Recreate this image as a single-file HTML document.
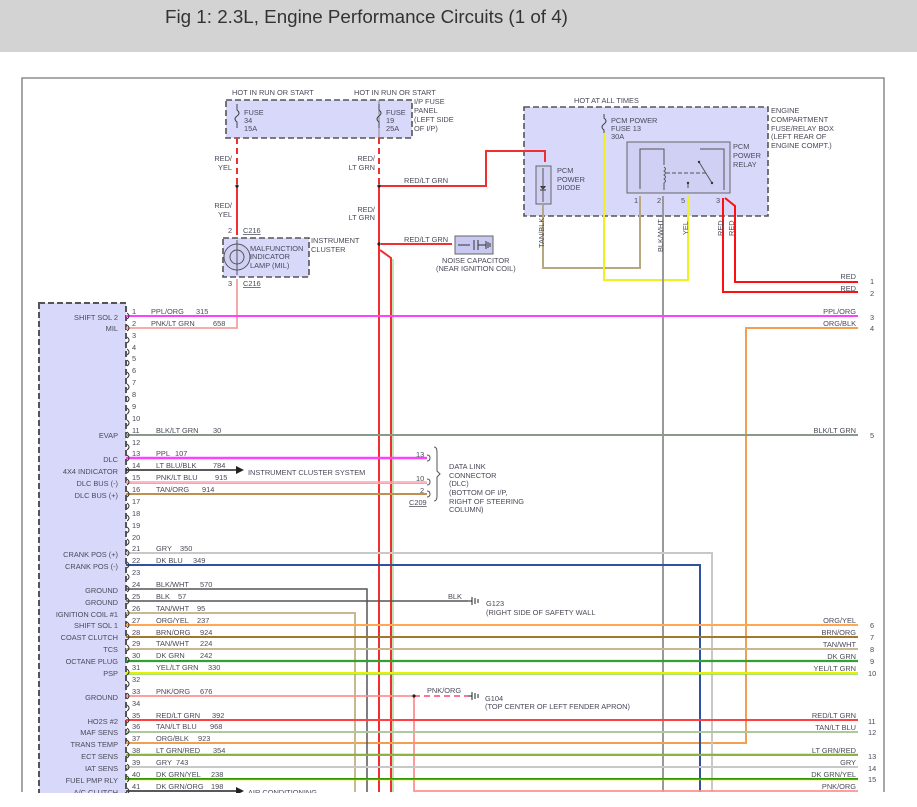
<!DOCTYPE html>
<html><head><meta charset="utf-8"><style>
html,body{margin:0;padding:0;background:#fff;width:917px;height:807px;overflow:hidden}
.hdr{position:absolute;left:0;top:0;width:917px;height:52px;background:#d3d3d3}
.hdr div{position:absolute;left:165px;top:6px;font:18.8px "Liberation Sans",sans-serif;color:#333}
svg{position:absolute;left:0;top:0}
text{font-family:"Liberation Sans",sans-serif;font-size:7.4px;fill:#4a4a5a}
.r{text-anchor:end}
</style></head><body>
<div class="hdr"><div>Fig 1: 2.3L, Engine Performance Circuits (1 of 4)</div></div>
<svg width="917" height="807" viewBox="0 0 917 807">
<path d="M22,792 V78 H884 V792" fill="none" stroke="#777" stroke-width="1.3"/>
<rect x="39" y="303" width="87" height="492" fill="#d8d8fa" stroke="#555" stroke-width="2" stroke-dasharray="6,3"/>
<rect x="226" y="100" width="186" height="38" fill="#d8d8fa" stroke="#555" stroke-width="1.6" stroke-dasharray="6,3"/>
<line x1="379" y1="100" x2="379" y2="138" stroke="#888"/>
<rect x="223" y="238" width="86" height="39" fill="#d8d8fa" stroke="#555" stroke-width="1.6" stroke-dasharray="6,3"/>
<rect x="524" y="107" width="244" height="109" fill="#d8d8fa" stroke="#555" stroke-width="1.6" stroke-dasharray="6,3"/>
<rect x="627" y="142" width="103" height="51" fill="#d0d0f4" stroke="#666"/>
<rect x="536" y="166" width="15" height="38" fill="#d0d0f4" stroke="#666"/>
<rect x="455" y="236" width="38" height="18" fill="#c8c8f0" stroke="#666"/>
<path d="M640,189 V149 H664 V165 M664,167 q3,2 0,4 q3,2 0,4 q3,2 0,4 q3,2 0,4 V190 M688,183 V188 M700,149 H724 V190 M699,162 L712,183" fill="none" stroke="#555"/>
<line x1="666" y1="173" x2="708" y2="173" stroke="#555" stroke-dasharray="4,2"/>
<circle cx="688" cy="183" r="1.2" fill="#333"/><circle cx="699" cy="162" r="1.2" fill="#333"/><circle cx="712" cy="183" r="1.2" fill="#333"/>
<path d="M543,190 l-3,-4 h6 z" fill="#333"/><line x1="540" y1="190" x2="546" y2="190" stroke="#333"/>
<line x1="543" y1="168" x2="543" y2="202" stroke="#555"/>
<path d="M458,245 h12 M474,240 v10 M478,240 v10 M478,245 h8 M486,241 v8 M488,242 v6 M490,243 v4" stroke="#333" fill="none"/>
<circle cx="237" cy="257" r="13" fill="#d0d0f4" stroke="#555"/>
<circle cx="237" cy="257" r="7" fill="none" stroke="#555"/>
<line x1="237" y1="240" x2="237" y2="275" stroke="#555"/>
<path d="M237,104 v6 q4,3 0,6 q-4,3 0,6 v6 M379,104 v6 q4,3 0,6 q-4,3 0,6 v6 M604,114 v4 q4,3 0,6 q-4,3 0,6 v4" fill="none" stroke="#444"/>
<line x1="237" y1="138" x2="237" y2="186" stroke="#f03030" stroke-width="2" stroke-dasharray="6,4"/>
<line x1="237" y1="186" x2="237" y2="235" stroke="#f03030" stroke-width="2"/>
<line x1="379" y1="138" x2="379" y2="186" stroke="#f03030" stroke-width="2" stroke-dasharray="6,4"/>
<path d="M379,186 V792" stroke="#f03030" stroke-width="2" fill="none"/>
<path d="M380,250 L391,258 V792" stroke="#f03030" stroke-width="2" fill="none"/>
<path d="M393,259 V792" stroke="#60c040" stroke-width="0.8" fill="none"/>
<path d="M380,186 H486 V151 H545 V162" stroke="#f03030" stroke-width="2" fill="none"/>
<path d="M381,244 H452" stroke="#f03030" stroke-width="2" fill="none"/>
<circle cx="237" cy="186" r="1.6" fill="#222"/><circle cx="379" cy="186" r="1.6" fill="#222"/><circle cx="379" cy="244" r="1.6" fill="#222"/>
<path d="M237,279 V328 H126" stroke="#f4a0a0" stroke-width="1.8" fill="none"/>
<path d="M543,205 V268 H640 V196" stroke="#b8a880" stroke-width="2" fill="none"/>
<path d="M604,133 V280 H688 V196" stroke="#f0f020" stroke-width="2" fill="none"/>
<path d="M663,196 V792" stroke="#999" stroke-width="2" fill="none"/>
<path d="M723,198 V292 H858 M725,198 L735,206 V282 H858" stroke="#ff1010" stroke-width="2" fill="none"/>
<line x1="126" y1="316" x2="858" y2="316" stroke="#ff40ff" stroke-width="2"/>
<path d="M126,743 H746 V328 H858" stroke="#f0a050" stroke-width="2" fill="none"/>
<line x1="126" y1="435" x2="858" y2="435" stroke="#8a9a8a" stroke-width="2"/>
<line x1="126" y1="458" x2="427" y2="458" stroke="#ff40ff" stroke-width="2.5"/>
<line x1="126" y1="470" x2="236" y2="470" stroke="#222" stroke-width="1.5"/><path d="M236,466 l8,4 l-8,4z" fill="#222"/>
<line x1="126" y1="482" x2="427" y2="482" stroke="#ffa0b0" stroke-width="1.5"/><line x1="126" y1="483.5" x2="427" y2="483.5" stroke="#90c8f0" stroke-width="1"/>
<line x1="126" y1="494" x2="427" y2="494" stroke="#c09050" stroke-width="2"/>
<path d="M126,553 H712 V792" stroke="#c8c8c8" stroke-width="2" fill="none"/>
<path d="M126,565 H700 V792" stroke="#3050a0" stroke-width="2" fill="none"/>
<path d="M126,589 H367 V792" stroke="#555" stroke-width="1.5" fill="none"/>
<line x1="126" y1="601" x2="468" y2="601" stroke="#555" stroke-width="1.5"/>
<path d="M126,613 H355 V792" stroke="#c8b890" stroke-width="2" fill="none"/>
<line x1="126" y1="625" x2="858" y2="625" stroke="#ffa850" stroke-width="2"/>
<line x1="126" y1="637" x2="858" y2="637" stroke="#a07830" stroke-width="2"/>
<line x1="126" y1="649" x2="858" y2="649" stroke="#c8b890" stroke-width="2"/>
<line x1="126" y1="661" x2="858" y2="661" stroke="#33a033" stroke-width="2.2"/>
<line x1="126" y1="673" x2="858" y2="673" stroke="#e8f000" stroke-width="2"/><line x1="126" y1="674.5" x2="858" y2="674.5" stroke="#90d060" stroke-width="0.8"/>
<line x1="126" y1="696" x2="414" y2="696" stroke="#ff9090" stroke-width="1.8"/>
<line x1="414" y1="696" x2="468" y2="696" stroke="#ff6080" stroke-width="1.8" stroke-dasharray="6,4"/>
<path d="M414,696 V791 H858" stroke="#ff9090" stroke-width="1.8" fill="none"/>
<circle cx="414" cy="696" r="1.6" fill="#222"/>
<line x1="126" y1="720" x2="858" y2="720" stroke="#ff4040" stroke-width="2"/>
<line x1="126" y1="732" x2="858" y2="732" stroke="#b0c8a0" stroke-width="2"/>
<line x1="126" y1="755" x2="858" y2="755" stroke="#66cc33" stroke-width="2"/><line x1="126" y1="754" x2="858" y2="754" stroke="#ff6060" stroke-width="0.6"/>
<line x1="126" y1="767" x2="858" y2="767" stroke="#c8c8c8" stroke-width="2"/>
<line x1="126" y1="779" x2="858" y2="779" stroke="#339900" stroke-width="2"/><line x1="126" y1="780" x2="858" y2="780" stroke="#e0e000" stroke-width="0.6"/>
<line x1="126" y1="791" x2="236" y2="791" stroke="#222" stroke-width="1.5"/><path d="M236,787 l8,4 l-8,4z" fill="#222"/>
<path d="M468,601 h4 M472,597 v8 M475,598 v6 M478,599 v4 M468,696 h4 M472,692 v8 M475,693 v6 M478,694 v4" stroke="#222" fill="none"/>
<path d="M427,455 q3,0 3,3 q0,3 -3,3 M427,479 q3,0 3,3 q0,3 -3,3 M427,491 q3,0 3,3 q0,3 -3,3 M434,447 q3,0 3,5 v19 l3,3 l-3,3 v19 q0,5 -3,5" stroke="#555" fill="none"/>
<path d="M127,313 q4,3 0,6 M127,325 q4,3 0,6 M127,337 q4,3 0,6 M127,349 q4,3 0,6 M127,360 q4,3 0,6 M127,372 q4,3 0,6 M127,384 q4,3 0,6 M127,396 q4,3 0,6 M127,408 q4,3 0,6 M127,420 q4,3 0,6 M127,432 q4,3 0,6 M127,444 q4,3 0,6 M127,455 q4,3 0,6 M127,467 q4,3 0,6 M127,479 q4,3 0,6 M127,491 q4,3 0,6 M127,503 q4,3 0,6 M127,515 q4,3 0,6 M127,527 q4,3 0,6 M127,539 q4,3 0,6 M127,550 q4,3 0,6 M127,562 q4,3 0,6 M127,574 q4,3 0,6 M127,586 q4,3 0,6 M127,598 q4,3 0,6 M127,610 q4,3 0,6 M127,622 q4,3 0,6 M127,634 q4,3 0,6 M127,645 q4,3 0,6 M127,657 q4,3 0,6 M127,669 q4,3 0,6 M127,681 q4,3 0,6 M127,693 q4,3 0,6 M127,705 q4,3 0,6 M127,717 q4,3 0,6 M127,728 q4,3 0,6 M127,740 q4,3 0,6 M127,752 q4,3 0,6 M127,764 q4,3 0,6 M127,776 q4,3 0,6 M127,788 q4,3 0,6" stroke="#333" fill="none"/>
<text x="232" y="95">HOT IN RUN OR START</text>
<text x="354" y="95">HOT IN RUN OR START</text>
<text x="244" y="115">FUSE</text><text x="244" y="123">34</text><text x="244" y="131">15A</text>
<text x="386" y="115">FUSE</text><text x="386" y="123">19</text><text x="386" y="131">25A</text>
<text x="414" y="104">I/P FUSE</text><text x="414" y="113">PANEL</text><text x="414" y="122">(LEFT SIDE</text><text x="414" y="131">OF I/P)</text>
<text class="r" x="232" y="161">RED/</text><text class="r" x="232" y="170">YEL</text>
<text class="r" x="232" y="208">RED/</text><text class="r" x="232" y="217">YEL</text>
<text class="r" x="375" y="161">RED/</text><text class="r" x="375" y="170">LT GRN</text>
<text class="r" x="375" y="212">RED/</text><text class="r" x="375" y="220">LT GRN</text>
<text x="404" y="183">RED/LT GRN</text>
<text x="404" y="242">RED/LT GRN</text>
<text x="442" y="263">NOISE CAPACITOR</text><text x="436" y="271">(NEAR IGNITION COIL)</text>
<text x="228" y="233">2</text><text x="243" y="233" text-decoration="underline">C216</text>
<text x="228" y="286">3</text><text x="243" y="286" text-decoration="underline">C216</text>
<text x="250" y="251">MALFUNCTION</text><text x="250" y="259">INDICATOR</text><text x="250" y="268">LAMP (MIL)</text>
<text x="311" y="243">INSTRUMENT</text><text x="311" y="252">CLUSTER</text>
<text x="574" y="103">HOT AT ALL TIMES</text>
<text x="611" y="123">PCM POWER</text><text x="611" y="131">FUSE 13</text><text x="611" y="139">30A</text>
<text x="557" y="173">PCM</text><text x="557" y="182">POWER</text><text x="557" y="190">DIODE</text>
<text x="733" y="149">PCM</text><text x="733" y="158">POWER</text><text x="733" y="167">RELAY</text>
<text x="771" y="113">ENGINE</text><text x="771" y="122">COMPARTMENT</text><text x="771" y="131">FUSE/RELAY BOX</text><text x="771" y="139">(LEFT REAR OF</text><text x="771" y="148">ENGINE COMPT.)</text>
<text x="634" y="203">1</text><text x="657" y="203">2</text><text x="681" y="203">5</text><text x="716" y="203">3</text>
<text transform="translate(544,248) rotate(-90)">TAN/BLK</text>
<text transform="translate(663,252) rotate(-90)">BLK/WHT</text>
<text transform="translate(688,235) rotate(-90)">YEL</text>
<text transform="translate(723,236) rotate(-90)">RED</text>
<text transform="translate(734,236) rotate(-90)">RED</text>
<text class="r" x="856" y="279">RED</text><text x="870" y="284">1</text>
<text class="r" x="856" y="291">RED</text><text x="870" y="296">2</text>
<text class="r" x="856" y="314">PPL/ORG</text><text x="870" y="320">3</text>
<text class="r" x="856" y="326">ORG/BLK</text><text x="870" y="331">4</text>
<text class="r" x="856" y="433">BLK/LT GRN</text><text x="870" y="438">5</text>
<text class="r" x="856" y="623">ORG/YEL</text><text x="870" y="628">6</text>
<text class="r" x="856" y="635">BRN/ORG</text><text x="870" y="640">7</text>
<text class="r" x="856" y="647">TAN/WHT</text><text x="870" y="652">8</text>
<text class="r" x="856" y="659">DK GRN</text><text x="870" y="664">9</text>
<text class="r" x="856" y="671">YEL/LT GRN</text><text x="868" y="676">10</text>
<text class="r" x="856" y="718">RED/LT GRN</text><text x="868" y="724">11</text>
<text class="r" x="856" y="730">TAN/LT BLU</text><text x="868" y="735">12</text>
<text class="r" x="856" y="753">LT GRN/RED</text><text x="868" y="759">13</text>
<text class="r" x="856" y="765">GRY</text><text x="868" y="771">14</text>
<text class="r" x="856" y="777">DK GRN/YEL</text><text x="868" y="782">15</text>
<text class="r" x="856" y="789">PNK/ORG</text>
<text x="416" y="457">13</text><text x="416" y="481">10</text><text x="420" y="493">2</text>
<text x="409" y="505" text-decoration="underline">C209</text>
<text x="449" y="469">DATA LINK</text><text x="449" y="478">CONNECTOR</text><text x="449" y="486">(DLC)</text><text x="449" y="495">(BOTTOM OF I/P,</text><text x="449" y="504">RIGHT OF STEERING</text><text x="449" y="512">COLUMN)</text>
<text x="248" y="475">INSTRUMENT CLUSTER SYSTEM</text>
<text x="248" y="795">AIR CONDITIONING</text>
<text x="448" y="599">BLK</text>
<text x="486" y="606">G123</text><text x="486" y="615">(RIGHT SIDE OF SAFETY WALL</text>
<text x="427" y="693">PNK/ORG</text>
<text x="485" y="701">G104</text><text x="485" y="709">(TOP CENTER OF LEFT FENDER APRON)</text>
<text class="r" x="118" y="320">SHIFT SOL 2</text>
<text class="r" x="118" y="331">MIL</text>
<text class="r" x="118" y="438">EVAP</text>
<text class="r" x="118" y="462">DLC</text>
<text class="r" x="118" y="474">4X4 INDICATOR</text>
<text class="r" x="118" y="486">DLC BUS (-)</text>
<text class="r" x="118" y="498">DLC BUS (+)</text>
<text class="r" x="118" y="557">CRANK POS (+)</text>
<text class="r" x="118" y="569">CRANK POS (-)</text>
<text class="r" x="118" y="593">GROUND</text>
<text class="r" x="118" y="605">GROUND</text>
<text class="r" x="118" y="617">IGNITION COIL #1</text>
<text class="r" x="118" y="628">SHIFT SOL 1</text>
<text class="r" x="118" y="640">COAST CLUTCH</text>
<text class="r" x="118" y="652">TCS</text>
<text class="r" x="118" y="664">OCTANE PLUG</text>
<text class="r" x="118" y="676">PSP</text>
<text class="r" x="118" y="700">GROUND</text>
<text class="r" x="118" y="724">HO2S #2</text>
<text class="r" x="118" y="735">MAF SENS</text>
<text class="r" x="118" y="747">TRANS TEMP</text>
<text class="r" x="118" y="759">ECT SENS</text>
<text class="r" x="118" y="771">IAT SENS</text>
<text class="r" x="118" y="783">FUEL PMP RLY</text>
<text class="r" x="118" y="795">A/C CLUTCH</text>
<text x="132" y="314">1</text><text x="132" y="326">2</text><text x="132" y="338">3</text><text x="132" y="350">4</text><text x="132" y="361">5</text><text x="132" y="373">6</text><text x="132" y="385">7</text><text x="132" y="397">8</text><text x="132" y="409">9</text><text x="132" y="421">10</text><text x="132" y="433">11</text><text x="132" y="445">12</text><text x="132" y="456">13</text><text x="132" y="468">14</text><text x="132" y="480">15</text><text x="132" y="492">16</text><text x="132" y="504">17</text><text x="132" y="516">18</text><text x="132" y="528">19</text><text x="132" y="540">20</text><text x="132" y="551">21</text><text x="132" y="563">22</text><text x="132" y="575">23</text><text x="132" y="587">24</text><text x="132" y="599">25</text><text x="132" y="611">26</text><text x="132" y="623">27</text><text x="132" y="635">28</text><text x="132" y="646">29</text><text x="132" y="658">30</text><text x="132" y="670">31</text><text x="132" y="682">32</text><text x="132" y="694">33</text><text x="132" y="706">34</text><text x="132" y="718">35</text><text x="132" y="729">36</text><text x="132" y="741">37</text><text x="132" y="753">38</text><text x="132" y="765">39</text><text x="132" y="777">40</text><text x="132" y="789">41</text>
<text x="151" y="314">PPL/ORG</text><text x="196" y="314">315</text>
<text x="151" y="326">PNK/LT GRN</text><text x="213" y="326">658</text>
<text x="156" y="433">BLK/LT GRN</text><text x="213" y="433">30</text>
<text x="156" y="456">PPL</text><text x="175" y="456">107</text>
<text x="156" y="468">LT BLU/BLK</text><text x="213" y="468">784</text>
<text x="156" y="480">PNK/LT BLU</text><text x="215" y="480">915</text>
<text x="156" y="492">TAN/ORG</text><text x="202" y="492">914</text>
<text x="156" y="551">GRY</text><text x="180" y="551">350</text>
<text x="156" y="563">DK BLU</text><text x="193" y="563">349</text>
<text x="156" y="587">BLK/WHT</text><text x="200" y="587">570</text>
<text x="156" y="599">BLK</text><text x="178" y="599">57</text>
<text x="156" y="611">TAN/WHT</text><text x="197" y="611">95</text>
<text x="156" y="623">ORG/YEL</text><text x="197" y="623">237</text>
<text x="156" y="635">BRN/ORG</text><text x="200" y="635">924</text>
<text x="156" y="646">TAN/WHT</text><text x="200" y="646">224</text>
<text x="156" y="658">DK GRN</text><text x="200" y="658">242</text>
<text x="156" y="670">YEL/LT GRN</text><text x="208" y="670">330</text>
<text x="156" y="694">PNK/ORG</text><text x="200" y="694">676</text>
<text x="156" y="718">RED/LT GRN</text><text x="212" y="718">392</text>
<text x="156" y="729">TAN/LT BLU</text><text x="210" y="729">968</text>
<text x="156" y="741">ORG/BLK</text><text x="198" y="741">923</text>
<text x="156" y="753">LT GRN/RED</text><text x="213" y="753">354</text>
<text x="156" y="765">GRY</text><text x="176" y="765">743</text>
<text x="156" y="777">DK GRN/YEL</text><text x="211" y="777">238</text>
<text x="156" y="789">DK GRN/ORG</text><text x="211" y="789">198</text>
<rect x="0" y="793" width="917" height="14" fill="#fff"/>
</svg>
</body></html>
